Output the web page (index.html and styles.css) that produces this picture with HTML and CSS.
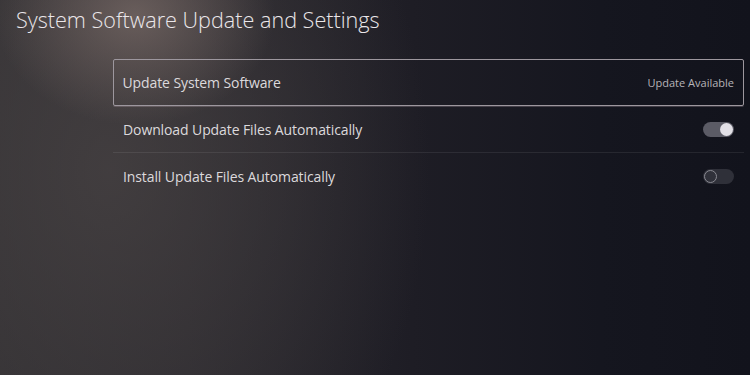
FILE: index.html
```html
<!DOCTYPE html>
<html>
<head>
<meta charset="utf-8">
<link rel="stylesheet" href="styles.css">
</head>
<body>
<div class="screen">
  <h1 class="title">System Software Update and Settings</h1>
  <div class="list">
    <div class="row row-focused">
      <span class="label">Update System Software</span>
      <span class="value">Update Available</span>
    </div>
    <div class="row row-divided">
      <span class="label">Download Update Files Automatically</span>
      <span class="toggle toggle-on"><span class="knob"></span></span>
    </div>
    <div class="row">
      <span class="label">Install Update Files Automatically</span>
      <span class="toggle toggle-off"><span class="knob"></span></span>
    </div>
  </div>
</div>
</body>
</html>
```
FILE: styles.css
```css
html, body {
  margin: 0;
  padding: 0;
}
body {
  width: 750px;
  height: 375px;
  overflow: hidden;
  font-family: "Open Sans", "Noto Sans", sans-serif;
  color: #e6e3e6;
}
.screen {
  width: 750px;
  height: 375px;
  box-sizing: border-box;
  padding: 5px 6px 0 16px;
  background:
    radial-gradient(ellipse 140px 110px at 135px 15px, rgba(125,110,106,0.7), rgba(125,110,106,0) 100%),
    radial-gradient(ellipse 320px 420px at 110px 170px, rgba(72,67,68,0.75), rgba(72,67,68,0) 100%),
    linear-gradient(90deg, #323033 0%, #2b292e 25%, #1e1d25 55%, #15161f 80%, #12131c 100%);
}
.title {
  margin: 0;
  font-weight: 300;
  font-size: 21.6px;
  line-height: 30px;
  letter-spacing: 0px;
  color: #ebe7ea;
}
.list {
  margin: 24px 0 0 97px;
  width: 631px;
  display: flex;
  flex-direction: column;
}
.row {
  height: 47px;
  box-sizing: border-box;
  display: flex;
  align-items: center;
  justify-content: space-between;
  padding: 0 10px 0 10px;
  position: relative;
}
.row-focused {
  border: 1.5px solid #9d979e;
  border-radius: 2px;
  padding: 0 9px 0 8.5px;
  box-shadow: 0 1px 0 rgba(200,180,190,0.25);
}
.row-divided {
  border-bottom: 1px solid rgba(255,255,255,0.08);
}
.label {
  font-size: 14px;
  letter-spacing: -0.1px;
  color: #dcd9dc;
}
.value {
  font-size: 11px;
  color: #b7b4b8;
}
.toggle {
  width: 31px;
  height: 15px;
  border-radius: 8px;
  display: flex;
  align-items: center;
  box-sizing: border-box;
  padding: 0 1px;
}
.toggle-on {
  background: #5b5b65;
  justify-content: flex-end;
}
.toggle-on .knob {
  width: 13px;
  height: 13px;
  border-radius: 50%;
  background: #e2e0e6;
}
.toggle-off {
  background: #2f3039;
  justify-content: flex-start;
}
.toggle-off .knob {
  width: 13px;
  height: 13px;
  box-sizing: border-box;
  border-radius: 50%;
  border: 1.5px solid #8a8a92;
  background: #30313a;
}
```
